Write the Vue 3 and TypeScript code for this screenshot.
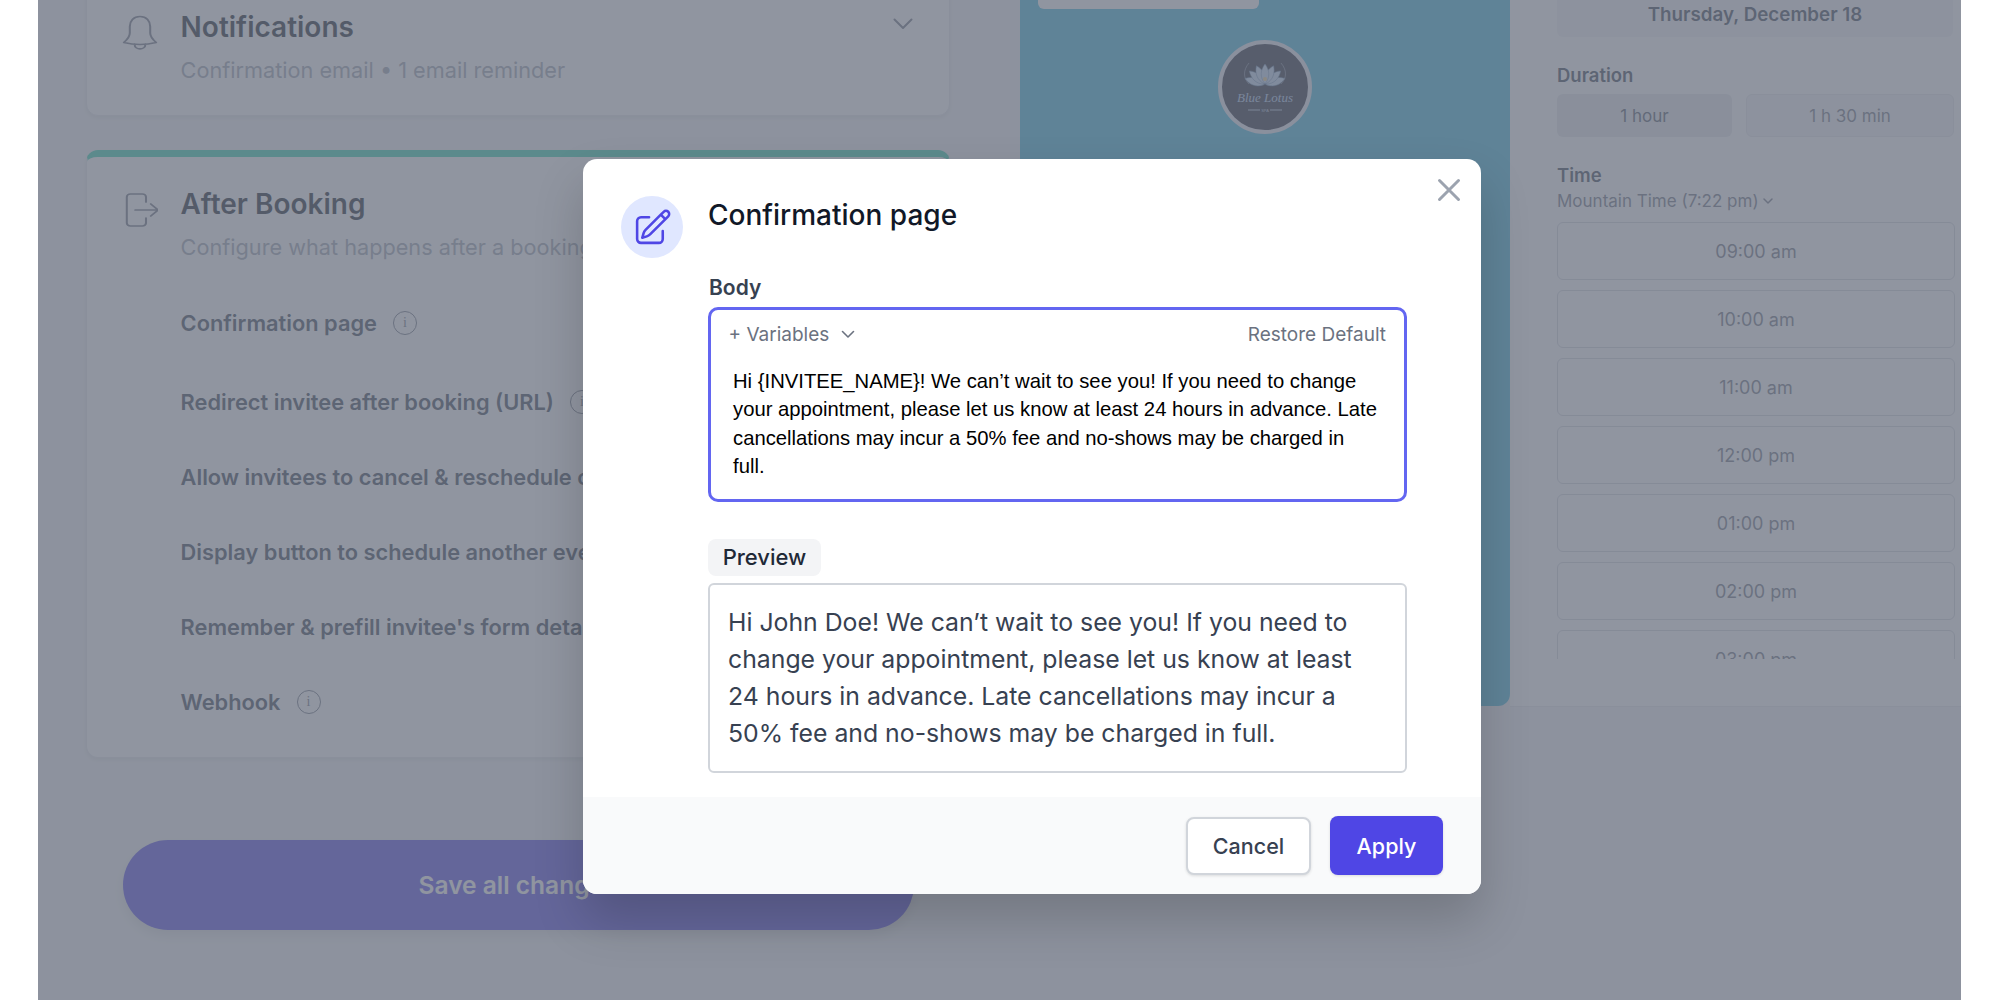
<script setup lang="ts">
const rows: { label: string; info: boolean }[] = [
  { label: 'Confirmation page', info: true },
  { label: 'Redirect invitee after booking (URL)', info: true },
  { label: 'Allow invitees to cancel & reschedule online', info: false },
  { label: 'Display button to schedule another event', info: false },
  { label: "Remember & prefill invitee's form details", info: false },
  { label: 'Webhook', info: true },
]
const slots: string[] = ['09:00 am', '10:00 am', '11:00 am', '12:00 pm', '01:00 pm', '02:00 pm', '03:00 pm']
const petals: number[] = [-72, -48, -24, 72, 48, 24, 0]
</script>

<template>
  <div class="screen">
    <div class="page">
      <div class="left">
        <section class="card notif">
          <svg class="side-icon" width="36" height="36" viewBox="0 0 30 36" preserveAspectRatio="none" fill="none" stroke="currentColor" stroke-width="1.7" stroke-linecap="round" stroke-linejoin="round">
            <path d="M15 1.5C9.5 1.5 6.5 6 6.5 11.5V18C6.5 21.5 4 25 1.5 27.5C10 30 20 30 28.5 27.5C26 25 23.5 21.5 23.5 18V11.5C23.5 6 20.5 1.5 15 1.5ZM10.5 29.2C10.5 35.5 19.5 35.5 19.5 29.2" />
          </svg>
          <div class="card-text">
            <h2 class="card-title">Notifications</h2>
            <p class="card-sub">Confirmation email • 1 email reminder</p>
          </div>
          <svg class="chev" width="22" height="12" viewBox="0 0 20 12" fill="none" stroke="currentColor" stroke-width="2" stroke-linecap="round" stroke-linejoin="round">
            <path d="M1.5 1.5L10 10L18.5 1.5" />
          </svg>
        </section>

        <section class="card after">
          <div class="after-head">
            <svg class="side-icon" width="36" height="36" viewBox="-2 0 30 36" preserveAspectRatio="none" fill="none" stroke="currentColor" stroke-width="1.7" stroke-linecap="round" stroke-linejoin="round">
              <path d="M18 10V5A3 3 0 0 0 15 2H5A3 3 0 0 0 2 5V31A3 3 0 0 0 5 34H15A3 3 0 0 0 18 31V26M9 18H28M22 12L28 18L22 24" />
            </svg>
            <div class="card-text">
              <h2 class="card-title">After Booking</h2>
              <p class="card-sub">Configure what happens after a booking</p>
            </div>
          </div>
          <div class="rows">
            <div v-for="row in rows" :key="row.label" class="row">
              <span>{{ row.label }}</span>
              <span v-if="row.info" class="info">i</span>
            </div>
          </div>
        </section>

        <div class="save">Save all changes</div>
      </div>

      <div class="preview-panel">
        <div class="stub"></div>
        <svg class="logo" width="94" height="94" viewBox="0 0 94 94">
          <circle cx="47" cy="47" r="45" fill="#1c2233" stroke="#e8e9f2" stroke-width="4" />
          <path d="M31 23C25 30 25 38 31 44M63 23C69 30 69 38 63 44" fill="none" stroke="#9aa3b5" stroke-width="0.6" />
          <path v-for="a in petals" :key="a" d="M47 44C41.5 37 42.5 30 47 24C51.5 30 52.5 37 47 44Z" fill="#bfd6f2" stroke="#5a7fa8" stroke-width="0.5" :transform="`rotate(${a} 47 45)`" />
          <circle cx="47" cy="39" r="2" fill="#e8c98a" />
          <text x="47" y="62" text-anchor="middle" class="logo-name">Blue Lotus</text>
          <path d="M30 70H42M52 70H64" stroke="#a9bcd6" stroke-width="1.2" />
          <text x="47" y="71.5" text-anchor="middle" class="logo-spa">SPA</text>
        </svg>
      </div>

      <aside class="side">
        <div class="date">Thursday, December 18</div>
        <div class="label dur-label">Duration</div>
        <div class="durations">
          <div class="dur on">1 hour</div>
          <div class="dur off">1 h 30 min</div>
        </div>
        <div class="label time-label">Time</div>
        <div class="zone">
          Mountain Time (7:22 pm)
          <svg width="12" height="8" viewBox="0 0 12 8" fill="none" stroke="currentColor" stroke-width="1.5" stroke-linecap="round" stroke-linejoin="round"><path d="M2 2L6 6L10 2" /></svg>
        </div>
        <div class="slots">
          <div v-for="s in slots" :key="s" class="slot">{{ s }}</div>
        </div>
      </aside>

      <div class="overlay"></div>
    </div>

    <div class="modal">
      <svg class="close" width="38" height="38" viewBox="0 0 24 24" fill="none" stroke="#9ca3af" stroke-width="1.9" stroke-linecap="round" stroke-linejoin="round">
        <path d="M6 18L18 6M6 6l12 12" />
      </svg>
      <div class="modal-main">
        <div class="badge">
          <svg width="41" height="41" viewBox="0 0 24 24" fill="none" stroke="#4f46e5" stroke-width="1.5" stroke-linecap="round" stroke-linejoin="round">
            <path d="m16.862 4.487 1.687-1.688a1.875 1.875 0 1 1 2.652 2.652L10.582 16.07a4.5 4.5 0 0 1-1.897 1.13L6 18l.8-2.685a4.5 4.5 0 0 1 1.13-1.897l8.932-8.931Zm0 0L19.5 7.125M18 14v4.75A2.25 2.25 0 0 1 15.75 21H5.25A2.25 2.25 0 0 1 3 18.75V8.25A2.25 2.25 0 0 1 5.25 6H10" />
          </svg>
        </div>
        <div class="modal-col">
          <h1 class="modal-title">Confirmation page</h1>
          <div class="body-label">Body</div>
          <div class="editor">
            <div class="toolbar">
              <span class="vars">+ Variables
                <svg width="14" height="9" viewBox="0 0 14 9" fill="none" stroke="currentColor" stroke-width="1.6" stroke-linecap="round" stroke-linejoin="round"><path d="M1.5 1.5L7 7L12.5 1.5" /></svg>
              </span>
              <span class="restore">Restore Default</span>
            </div>
            <div class="editor-text">Hi {INVITEE_NAME}! We can’t wait to see you! If you need to change your appointment, please let us know at least 24 hours in advance. Late cancellations may incur a 50% fee and no-shows may be charged in full.</div>
          </div>
          <div class="pill">Preview</div>
          <div class="preview-box">Hi John Doe! We can’t wait to see you! If you need to change your appointment, please let us know at least 24 hours in advance. Late cancellations may incur a 50% fee and no-shows may be charged in full.</div>
        </div>
      </div>
      <div class="modal-foot">
        <button class="btn cancel">Cancel</button>
        <button class="btn apply">Apply</button>
      </div>
    </div>
  </div>
</template>

<style scoped>
.screen {
  position: relative;
  width: 2000px;
  height: 1000px;
  overflow: hidden;
  background: #fff;
  font-family: Inter, "Liberation Sans", sans-serif;
}
.page {
  position: relative;
  display: flex;
  align-items: flex-start;
  width: 1923px;
  height: 1000px;
  margin-left: 38px;
  overflow: hidden;
  background: #f3f4f6;
}
.overlay {
  position: absolute;
  inset: 0;
  background: rgba(107, 114, 128, 0.75);
}
.left {
  flex: none;
  width: 982px;
  padding-left: 48px;
  margin-top: -44px;
  box-sizing: border-box;
}
.card {
  width: 864px;
  box-sizing: border-box;
  background: #fff;
  border: 1px solid #e5e7eb;
  border-radius: 12px;
  box-shadow: 0 2px 4px rgba(0, 0, 0, 0.08);
}
.notif {
  display: flex;
  align-items: flex-start;
  height: 160px;
  padding: 53px 35px 0 35px;
}
.side-icon {
  flex: none;
  margin-top: 5px;
  color: #6b7280;
}
.card-text {
  margin-left: 22.6px;
}
.card-title {
  margin: 0;
  font-size: 28px;
  line-height: 34px;
  font-weight: 600;
  color: #111827;
}
.card-sub {
  margin: 10.5px 0 0;
  font-size: 21.7px;
  line-height: 30px;
  color: #9ca3af;
  white-space: nowrap;
}
.chev {
  margin-left: auto;
  margin-top: 8px;
  color: #6b7280;
}
.after {
  height: 608px;
  margin-top: 34px;
  border-top: 7px solid #30d2b0;
  padding: 30px 0 0 35px;
}
.after-head {
  display: flex;
  align-items: flex-start;
}
.rows {
  margin-left: 58.6px;
  margin-top: 23.5px;
}
.row {
  display: flex;
  align-items: center;
  height: 75px;
  font-size: 21.8px;
  font-weight: 600;
  color: #374151;
  white-space: nowrap;
}
.row:nth-child(2) {
  margin-top: 4px;
}
.info {
  display: flex;
  align-items: center;
  justify-content: center;
  box-sizing: border-box;
  width: 24px;
  height: 24px;
  margin-left: 16px;
  border: 1.5px solid #6b7280;
  border-radius: 50%;
  font-family: "Liberation Serif", serif;
  font-size: 14px;
  font-weight: 400;
  color: #6b7280;
}
.save {
  display: flex;
  align-items: center;
  justify-content: center;
  width: 791px;
  height: 90px;
  margin: 82px 0 0 36.5px;
  background: #4f46e5;
  border-radius: 45px;
  color: #fff;
  font-size: 24.5px;
  font-weight: 600;
  box-shadow: 0 6px 12px rgba(0, 0, 0, 0.1);
}
.preview-panel {
  flex: none;
  display: flex;
  flex-direction: column;
  align-items: flex-start;
  width: 490px;
  height: 706px;
  background: #3cb6dc;
  border-radius: 0 0 12px 0;
}
.stub {
  width: 221px;
  height: 9px;
  margin-left: 18px;
  background: #fff;
  border-radius: 0 0 6px 6px;
}
.logo {
  margin: 31px 0 0 198px;
}
.logo-name {
  font-family: "Liberation Serif", serif;
  font-style: italic;
  font-size: 13px;
  fill: #a9c4e8;
}
.logo-spa {
  font-family: "Liberation Sans", sans-serif;
  font-size: 4px;
  fill: #a9bcd6;
}
.side {
  flex: none;
  width: 451px;
  height: 707px;
  box-sizing: border-box;
  padding: 0 6px 0 47px;
  background: #fff;
  border-bottom: 1px solid #e5e7eb;
}
.date {
  display: flex;
  align-items: center;
  justify-content: center;
  height: 37px;
  padding-bottom: 9px;
  box-sizing: border-box;
  background: #f3f4f6;
  border-radius: 0 0 6px 6px;
  font-size: 18.8px;
  font-weight: 600;
  color: #374151;
  margin-right: 2px;
}
.label {
  font-size: 18.5px;
  line-height: 24px;
  font-weight: 600;
  color: #374151;
}
.dur-label {
  margin-top: 26px;
}
.durations {
  display: flex;
  gap: 14px;
  margin-top: 7px;
}
.dur {
  display: flex;
  align-items: center;
  justify-content: center;
  height: 43px;
  box-sizing: border-box;
  border-radius: 6px;
  font-size: 17px;
  color: #4b5563;
}
.dur.on {
  width: 175px;
  background: #e5e7eb;
}
.dur.off {
  width: 208px;
  color: #6b7280;
  background: #f3f4f6;
  border: 1px solid #e5e7eb;
}
.time-label {
  margin-top: 26px;
}
.zone {
  display: flex;
  align-items: center;
  gap: 3px;
  height: 24px;
  margin-top: 2px;
  font-size: 17px;
  color: #6b7280;
}
.slots {
  display: flex;
  flex-direction: column;
  gap: 10px;
  height: 437px;
  margin-top: 9px;
  overflow: hidden;
}
.slot {
  flex: none;
  display: flex;
  align-items: center;
  justify-content: center;
  height: 58px;
  box-sizing: border-box;
  border: 1.5px solid #d1d5db;
  border-radius: 6px;
  font-size: 18px;
  color: #6b7280;
}
.modal {
  position: absolute;
  left: 583px;
  top: 159px;
  display: flex;
  flex-direction: column;
  width: 898px;
  height: 735px;
  overflow: hidden;
  background: #fff;
  border-radius: 14px;
  box-shadow: 0 26px 50px rgba(0, 0, 0, 0.18);
}
.close {
  position: absolute;
  top: 12px;
  right: 13px;
}
.modal-main {
  flex: 1;
  display: flex;
  align-items: flex-start;
  padding: 38px 74px 0 38px;
}
.badge {
  flex: none;
  display: flex;
  align-items: center;
  justify-content: center;
  width: 62px;
  height: 62px;
  margin-top: -1px;
  background: #e0e7ff;
  border-radius: 50%;
}
.modal-col {
  flex: 1;
  margin-left: 25px;
  min-width: 0;
}
.modal-title {
  margin: 0;
  font-size: 28px;
  line-height: 37px;
  font-weight: 500;
  color: #111827;
}
.body-label {
  margin-top: 39.5px;
  padding-left: 1px;
  font-size: 21px;
  line-height: 28px;
  font-weight: 600;
  color: #374151;
}
.editor {
  height: 195px;
  margin-top: 5px;
  box-sizing: border-box;
  border: 3px solid #6366f1;
  border-radius: 10px;
  padding: 13px 18px 0 17.5px;
}
.toolbar {
  display: flex;
  align-items: center;
  justify-content: space-between;
  height: 24px;
  font-size: 19px;
  color: #6b7280;
}
.vars {
  display: flex;
  align-items: center;
  gap: 12px;
}
.editor-text {
  width: 646px;
  margin-top: 20px;
  padding-left: 4.5px;
  box-sizing: content-box;
  font-family: "Liberation Sans", Arial, sans-serif;
  font-size: 20.25px;
  line-height: 28.6px;
  color: #000;
}
.pill {
  display: flex;
  align-items: center;
  justify-content: center;
  width: 113px;
  height: 37px;
  margin-top: 37px;
  background: #f3f4f6;
  border-radius: 8px;
  font-size: 22px;
  font-weight: 500;
  color: #1f2937;
}
.preview-box {
  height: 190px;
  margin-top: 7px;
  box-sizing: border-box;
  border: 2px solid #d1d5db;
  border-radius: 6px;
  padding: 19px 18px 0 18px;
  font-size: 24.8px;
  line-height: 37.3px;
  color: #374151;
}
.modal-foot {
  flex: none;
  display: flex;
  align-items: center;
  justify-content: flex-end;
  gap: 19px;
  height: 97px;
  padding: 0 38px 0 0;
  box-sizing: border-box;
  background: #f9fafb;
}
.btn {
  height: 58px;
  padding: 0;
  border-radius: 8px;
  font-family: inherit;
  font-size: 21.5px;
  font-weight: 500;
}
.cancel {
  width: 125px;
  background: #fff;
  border: 2px solid #d1d5db;
  color: #374151;
  box-shadow: 0 1px 3px rgba(0, 0, 0, 0.12);
}
.apply {
  width: 113px;
  height: 59px;
  background: #4f46e5;
  border: none;
  color: #fff;
  box-shadow: 0 1px 3px rgba(0, 0, 0, 0.12);
}
</style>

<style>
html,
body {
  margin: 0;
  overflow: hidden;
}
</style>
